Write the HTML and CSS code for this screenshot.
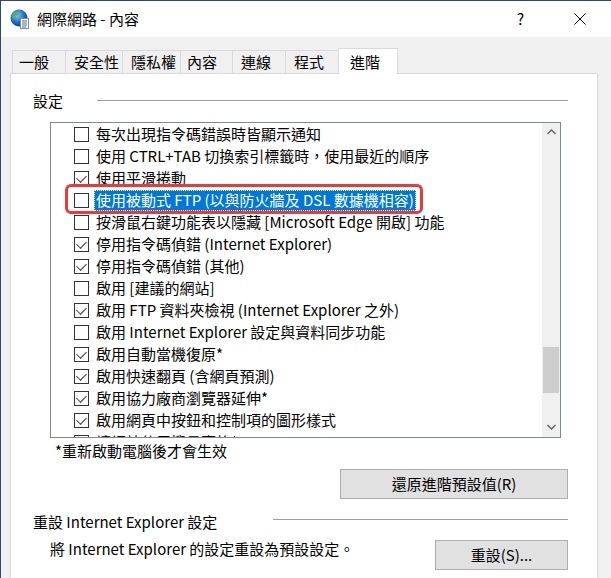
FILE: index.html
```html
<!DOCTYPE html>
<html lang="zh-Hant">
<head>
<meta charset="utf-8">
<title>網際網路 - 內容</title>
<link rel="stylesheet" href="styles.css">
</head>
<body>
<div class="window">
  <div class="titlebar">
    <svg class="app-icon" width="20" height="20" viewBox="0 0 20 20">
      <defs>
        <radialGradient id="g" cx="40%" cy="35%" r="65%">
          <stop offset="0" stop-color="#7fc4f5"/>
          <stop offset="0.6" stop-color="#1f76c9"/>
          <stop offset="1" stop-color="#0d3f86"/>
        </radialGradient>
      </defs>
      <circle cx="9" cy="9" r="8.5" fill="url(#g)"/>
      <path d="M3 5 C5 3 8 3 9 5 C8 7 6 6 5 8 C4 10 3 9 2 8 Z" fill="#5fb445"/>
      <path d="M10 9 C12 8 14 9 14 11 C13 14 11 15 10 13 Z" fill="#5fb445"/>
      <rect x="10.5" y="9.5" width="8" height="10" fill="#fff" stroke="#8a8a8a"/>
      <path d="M12 12h5M12 14h5M12 16h5M12 18h4" stroke="#3d6fb3" stroke-width="1"/>
    </svg>
    <span class="title">網際網路 - 內容</span>
    <span class="tb-help">?</span>
    <svg class="tb-close" width="12" height="12" viewBox="0 0 12 12"><path d="M0.5 0.5L11.5 11.5M11.5 0.5L0.5 11.5" stroke="#000" stroke-width="1"/></svg>
  </div>
  <div class="client">
    <div class="tabs">
      <div class="tab t1">一般</div>
      <div class="tab t2">安全性</div>
      <div class="tab t3">隱私權</div>
      <div class="tab t4">內容</div>
      <div class="tab t5">連線</div>
      <div class="tab t6">程式</div>
      <div class="tab active">進階</div>
    </div>
    <div class="panel">
      <div class="group-head"><span>設定</span><span class="rule r1"></span></div>
      <div class="listbox">
        <div class="rows">
          <div class="row"><span class="cb"></span><span class="lbl">每次出現指令碼錯誤時皆顯示通知</span></div>
          <div class="row"><span class="cb"></span><span class="lbl">使用 CTRL+TAB 切換索引標籤時，使用最近的順序</span></div>
          <div class="row"><span class="cb on"></span><span class="lbl">使用平滑捲動</span></div>
          <div class="row sel"><span class="cb"></span><span class="lbl">使用被動式 FTP (以與防火牆及 DSL 數據機相容)</span><span class="redmark"></span></div>
          <div class="row"><span class="cb"></span><span class="lbl">按滑鼠右鍵功能表以隱藏 [Microsoft Edge 開啟] 功能</span></div>
          <div class="row"><span class="cb on"></span><span class="lbl">停用指令碼偵錯 (Internet Explorer)</span></div>
          <div class="row"><span class="cb on"></span><span class="lbl">停用指令碼偵錯 (其他)</span></div>
          <div class="row"><span class="cb"></span><span class="lbl">啟用 [建議的網站]</span></div>
          <div class="row"><span class="cb on"></span><span class="lbl">啟用 FTP 資料夾檢視 (Internet Explorer 之外)</span></div>
          <div class="row"><span class="cb"></span><span class="lbl">啟用 Internet Explorer 設定與資料同步功能</span></div>
          <div class="row"><span class="cb on"></span><span class="lbl">啟用自動當機復原*</span></div>
          <div class="row"><span class="cb on"></span><span class="lbl">啟用快速翻頁 (含網頁預測)</span></div>
          <div class="row"><span class="cb on"></span><span class="lbl">啟用協力廠商瀏覽器延伸*</span></div>
          <div class="row"><span class="cb on"></span><span class="lbl">啟用網頁中按鈕和控制項的圖形樣式</span></div>
          <div class="row"><span class="cb"></span><span class="lbl">讓網站使用搜尋窗格*</span></div>
        </div>
        <div class="scrollbar">
          <div class="sb-btn"><svg width="9" height="6" viewBox="0 0 9 6"><path d="M0.5 5L4.5 1L8.5 5" fill="none" stroke="#606060" stroke-width="1.4"/></svg></div>
          <div class="sb-thumb"></div>
          <div class="sb-btn sb-down"><svg width="9" height="6" viewBox="0 0 9 6"><path d="M0.5 1L4.5 5L8.5 1" fill="none" stroke="#606060" stroke-width="1.4"/></svg></div>
        </div>
      </div>
      <div class="note">*重新啟動電腦後才會生效</div>
      <div class="btn-row"><button class="btn wide">還原進階預設值(R)</button></div>
      <div class="group-head head2"><span>重設 Internet Explorer 設定</span><span class="rule r2"></span></div>
      <div class="reset-row">
        <span class="reset-text">將 Internet Explorer 的設定重設為預設設定。</span>
        <button class="btn narrow">重設(S)...</button>
      </div>
    </div>
  </div>
</div>
</body>
</html>
```
FILE: styles.css
```css
* { box-sizing: border-box; }
html, body { margin: 0; padding: 0; }
body {
  width: 611px;
  height: 578px;
  overflow: hidden;
  font-family: "Noto Sans CJK TC", "Noto Sans", sans-serif;
  font-size: 15px;
  color: #000;
  background: #f0f0f0;
}
.window {
  height: 578px;
  border-top: 1px solid #2b4a6f;
  border-left: 1px solid #2b4a6f;
  background: #f0f0f0;
}
.titlebar {
  height: 36px;
  background: #fff;
  display: flex;
  align-items: center;
  padding-left: 9px;
}
.app-icon { margin-right: 7px; margin-top: -1px; }
.title { line-height: 20px; }
.tb-help { margin-left: auto; margin-right: 50px; font-size: 15px; line-height: 20px; }
.tb-close { margin-right: 25px; }

.client { padding: 11px 0 0 9px; }
.tabs {
  display: flex;
  align-items: flex-end;
  height: 25px;
  padding-left: 2px;
  position: relative;
  z-index: 1;
}
.tab {
  height: 23px;
  line-height: 22px;
  border: 1px solid #d9d9d9;
  border-bottom: none;
  background: #f0f0f0;
  padding-left: 6px;
  margin-right: -1px;
  white-space: nowrap;
}
.t1 { width: 54px; }
.t2 { width: 58px; padding-left: 8px; }
.t3 { width: 59px; padding-left: 8px; }
.t4 { width: 53px; }
.t5 { width: 54px; padding-left: 8px; }
.t6 { width: 54px; padding-left: 8px; }
.tab.active {
  height: 26px;
  width: 60px;
  margin-bottom: -1px;
  padding-left: 11px;
  line-height: 25px;
  background: #fff;
  border-color: #d9d9d9;
}
.panel {
  width: 588px;
  height: 520px;
  background: #fff;
  border: 1px solid #d9d9d9;
  padding: 16px 29px 0 22px;
}
.group-head {
  display: flex;
  align-items: center;
  height: 22px;
  line-height: 22px;
}
.rule { flex: 1; height: 1px; background: #a0a0a0; }
.r1 { margin-left: 34px; margin-top: -2px; }
.r2 { margin-left: 56px; margin-top: -5px; }
.listbox {
  margin: 10px 0 0 17px;
  width: 511px;
  height: 316px;
  border: 1px solid #828790;
  display: flex;
  overflow: hidden;
}
.rows { flex: 1; overflow: hidden; }
.row {
  height: 22px;
  display: flex;
  align-items: center;
  padding-left: 23px;
  position: relative;
  white-space: nowrap;
}
.cb {
  flex: none;
  width: 15px;
  height: 15px;
  border: 1px solid #333;
  background: #fff;
  margin-right: 5px;
  position: relative;
}
.cb.on::after {
  content: "";
  position: absolute;
  left: 4px;
  top: 1px;
  width: 4px;
  height: 8px;
  border-right: 1.3px solid #555;
  border-bottom: 1.3px solid #555;
  transform: rotate(45deg) scaleX(1.3);
}
.lbl { line-height: 20px; padding: 0 2px 1px; height: 21px; }
.row.sel .lbl {
  background: #0078d7;
  color: #fff;
  outline: 1px dotted #fff;
  outline-offset: -1px;
}
.redmark {
  position: absolute;
  left: 14px;
  top: -5px;
  width: 358px;
  height: 30px;
  border: 3.5px solid #e8393d;
  border-radius: 6px;
}
.scrollbar {
  width: 18px;
  flex: none;
  background: #f0f0f0;
  display: flex;
  flex-direction: column;
}
.sb-btn {
  height: 17px;
  display: flex;
  align-items: center;
  justify-content: center;
}
.sb-thumb {
  height: 46px;
  margin: 207px 1px 0 1px;
  background: #cdcdcd;
}
.sb-down { margin-top: auto; margin-bottom: 2px; }
.note {
  height: 22px;
  line-height: 22px;
  margin: 2px 0 0 22px;
}
.btn-row { display: flex; justify-content: flex-end; margin-top: 7px; }
.btn {
  font-family: inherit;
  font-size: 15px;
  color: #000;
  height: 30px;
  background: #e1e1e1;
  border: 1px solid #adadad;
  padding: 0;
  line-height: 26px;
}
.wide { width: 228px; }
.narrow { width: 133px; }
.head2 { margin-top: 12px; }
.reset-row {
  display: flex;
  align-items: flex-start;
  justify-content: space-between;
  margin-top: 7px;
}
.reset-text { margin: -2px 0 0 17px; line-height: 22px; }
```
